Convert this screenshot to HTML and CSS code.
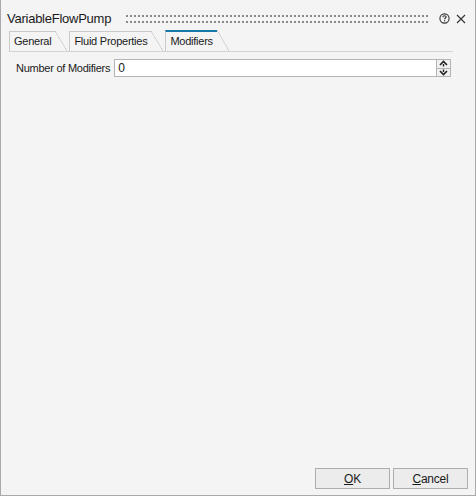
FILE: index.html
```html
<!DOCTYPE html>
<html>
<head>
<meta charset="utf-8">
<link rel="stylesheet" href="styles.css">
</head>
<body>
<div class="window">
  <div class="titlebar">
    <span class="title">VariableFlowPump</span>
    <span class="grip"></span>
    <span class="help">
      <svg width="11" height="11" viewBox="0 0 11 11"><circle cx="5.5" cy="5.5" r="4.6" fill="none" stroke="#333" stroke-width="1.1"/><path d="M3.9 4.3 C3.9 3.3 4.6 2.8 5.5 2.8 C6.4 2.8 7.1 3.3 7.1 4.1 C7.1 5 5.6 5.1 5.6 6.3" fill="none" stroke="#333" stroke-width="1.1"/><rect x="5" y="7.2" width="1.2" height="1.2" fill="#333"/></svg>
    </span>
    <span class="close">
      <svg width="10" height="10" viewBox="0 0 10 10"><path d="M1 1 L9 9 M9 1 L1 9" stroke="#333" stroke-width="1.1"/></svg>
    </span>
  </div>
  <div class="tabs">
    <div class="tab">General</div>
    <div class="tab">Fluid Properties</div>
    <div class="tab active">Modifiers</div>
  </div>
  <div class="content">
    <div class="row">
      <label class="label">Number of Modifiers</label>
      <div class="input">0</div>
      <div class="spin">
        <div class="spin-btn"><svg width="9" height="7" viewBox="0 0 9 7"><path d="M1 5 L4.5 1.5 L8 5" fill="none" stroke="#222" stroke-width="1.6"/><rect x="3.8" y="4" width="1.4" height="2.5" fill="#222"/></svg></div>
        <div class="spin-btn"><svg width="9" height="7" viewBox="0 0 9 7"><path d="M1 2 L4.5 5.5 L8 2" fill="none" stroke="#222" stroke-width="1.6"/><rect x="3.8" y="0.5" width="1.4" height="2.5" fill="#222"/></svg></div>
      </div>
    </div>
  </div>
  <div class="footer">
    <button class="btn"><u>O</u>K</button>
    <button class="btn"><u>C</u>ancel</button>
  </div>
</div>
</body>
</html>
```

FILE: styles.css
```css
* { box-sizing: border-box; }
html, body { margin: 0; padding: 0; }
body {
  width: 476px;
  height: 496px;
  background: #f4f4f4;
  font-family: "Liberation Sans", Arial, sans-serif;
  font-size: 11px;
  letter-spacing: -0.25px;
  color: #1a1a1a;
}
.window {
  width: 476px;
  height: 496px;
  border-left: 1px solid #a9a9a9;
  border-right: 1px solid #a9a9a9;
  border-bottom: 1px solid #a9a9a9;
  display: flex;
  flex-direction: column;
}
.titlebar {
  height: 31px;
  display: flex;
  align-items: center;
  padding: 6px 9px 0 6px;
}
.title {
  font-size: 13px;
  letter-spacing: -0.25px;
  color: #1a1a1a;
}
.grip {
  flex: 1;
  height: 12px;
  margin: 0 11px 0 15px;
  background-image: radial-gradient(circle at 1px 3px, #8a8a8a 0.9px, transparent 1.3px);
  background-size: 4px 6px;
  background-position: 0 0;
}
.help { width: 11px; height: 11px; display: flex; margin-right: 6px; }
.close { width: 10px; height: 10px; display: flex; }
.tabs {
  margin: 0 22px 0 8px;
  height: 21px;
  display: flex;
  align-items: flex-end;
  border-bottom: 1px solid #d4d4d4;
}
.tab {
  position: relative;
  height: 20px;
  line-height: 18px;
  padding: 0 4px 0 4px;
  margin-right: 14px;
  border-left: 1px solid #c9c9c9;
  border-top: 1px solid #c9c9c9;
  color: #1a1a1a;
  font-size: 11px;
}
.tab::after {
  content: "";
  position: absolute;
  top: -1px;
  right: -12px;
  width: 12px;
  height: 20px;
  background: linear-gradient(to top right, transparent calc(50% - 0.6px), #c4c4c4 50%, transparent calc(50% + 0.6px));
}
.tab.active {
  height: 21px;
  border-top: 2px solid #1777a8;
  line-height: 18px;
}
.tab.active::after {
  top: -2px;
  height: 21px;
}
.content {
  flex: 1;
  padding: 7px 24px 0 15px;
}
.row {
  display: flex;
  align-items: center;
  height: 18px;
}
.label {
  margin-right: 4px;
  white-space: nowrap;
}
.input {
  flex: 1;
  height: 18px;
  background: #fff;
  border: 1px solid #b4b4b4;
  padding: 0 3px;
  line-height: 16px;
  font-size: 12px;
}
.spin {
  width: 14px;
  height: 18px;
  display: flex;
  flex-direction: column;
  border: 1px solid #b4b4b4;
  border-left: none;
  background: #f0f0f0;
}
.spin-btn {
  flex: 1;
  display: flex;
  align-items: center;
  justify-content: center;
}
.spin-btn + .spin-btn { border-top: 1px solid #b4b4b4; }
.footer {
  display: flex;
  justify-content: flex-end;
  gap: 3px;
  padding: 0 7px 6px 0;
}
.btn {
  width: 75px;
  height: 21px;
  background: #ececec;
  border: 1px solid #adadad;
  font-family: "Liberation Sans", Arial, sans-serif;
  font-size: 12px;
  letter-spacing: -0.2px;
  color: #1a1a1a;
  padding: 0;
}
```
